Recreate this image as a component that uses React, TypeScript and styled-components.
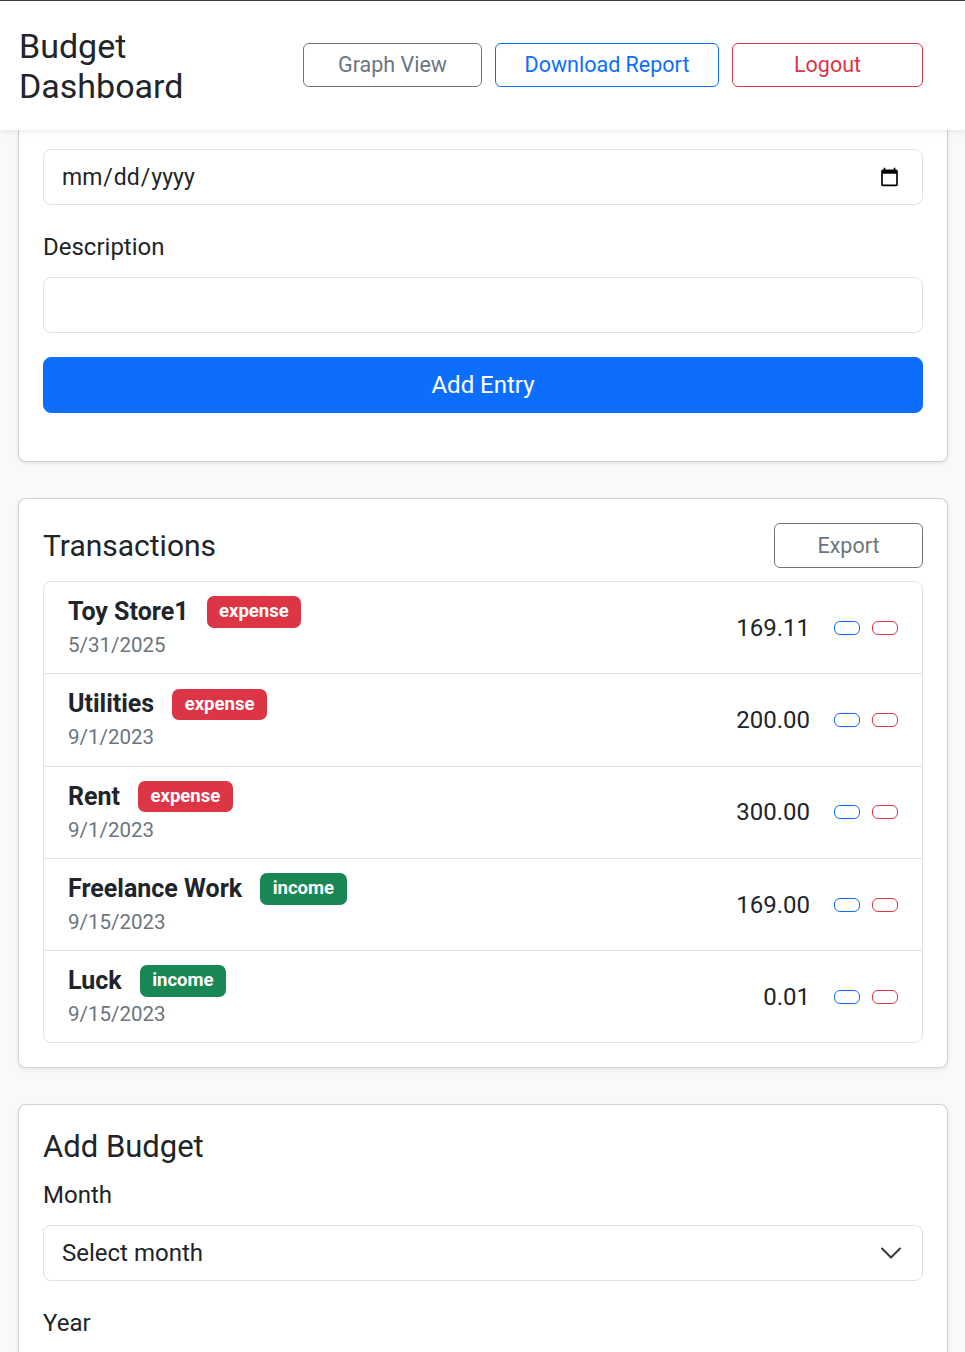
import React from 'react';
import styled, { createGlobalStyle } from 'styled-components';

const Global = createGlobalStyle`
  html, body { margin: 0; padding: 0; }
  body {
    background: #f8f9fa;
    font-family: Roboto, "Noto Sans", "Liberation Sans", sans-serif;
    color: #212529;
  }
  * { box-sizing: border-box; }
`;

type Tone = 'secondary' | 'primary' | 'danger';
const toneColor: Record<Tone, string> = {
  secondary: '#6c757d',
  primary: '#0d6efd',
  danger: '#dc3545',
};

const Header = styled.header`
  position: relative;
  z-index: 2;
  height: 130px;
  background: #fff;
  border-top: 1px solid #3c3c3c;
  box-shadow: 0 2px 6px rgba(0, 0, 0, 0.08);
  display: flex;
  align-items: center;
  justify-content: space-between;
  padding: 0 42px 0 19px;
`;

const Title = styled.h1`
  margin: 0;
  max-width: 200px;
  font-size: 34px;
  font-weight: 400;
  line-height: 40px;
  color: #212529;
`;

const Nav = styled.nav`
  display: flex;
  gap: 13px;
  margin-bottom: 2px;
`;

const OutlineButton = styled.button<{ $tone: Tone; $w: number; $h?: number }>`
  width: ${(p) => p.$w}px;
  height: ${(p) => p.$h ?? 44}px;
  background: transparent;
  border: 1px solid ${(p) => toneColor[p.$tone]};
  border-radius: 6px;
  color: ${(p) => toneColor[p.$tone]};
  font-family: inherit;
  font-size: 21.5px;
  font-weight: 400;
  padding: 0;
  cursor: pointer;
`;

const Main = styled.main`
  display: flex;
  flex-direction: column;
  gap: 36px;
  margin: 0 17px 0 18px;
`;

const Card = styled.section<{ $cut?: boolean }>`
  background: #fff;
  border: 1px solid rgba(0, 0, 0, 0.175);
  border-top: ${(p) => (p.$cut ? 'none' : '1px solid rgba(0, 0, 0, 0.175)')};
  border-radius: ${(p) => (p.$cut ? '0 0 8px 8px' : '8px')};
  box-shadow: 0 2px 4px rgba(0, 0, 0, 0.075);
  padding: ${(p) => (p.$cut ? '19px 24px 24px' : '24px')};
`;

const Group = styled.div`
  margin-bottom: 24px;
`;

const Label = styled.label`
  display: block;
  font-size: 24px;
  line-height: 36px;
  margin-bottom: 12px;
`;

const Input = styled.input`
  display: block;
  width: 100%;
  height: 56px;
  padding: 9px 18px;
  font-family: inherit;
  font-size: 24px;
  color: #212529;
  background: #fff;
  border: 1px solid #dee2e6;
  border-radius: 8px;
  outline: none;
`;

const DateInput = styled(Input)`
  padding: 9px 20px 9px 17px;
  font-size: 23px;
  &::-webkit-calendar-picker-indicator {
    width: 21px;
    height: 21px;
    margin: 0;
    opacity: 1;
  }
`;

const SelectWrap = styled.div`
  position: relative;
`;

const Select = styled.select`
  display: block;
  width: 100%;
  height: 56px;
  padding: 9px 56px 9px 18px;
  font-family: inherit;
  font-size: 24px;
  color: #212529;
  background: #fff;
  border: 1px solid #dee2e6;
  border-radius: 8px;
  appearance: none;
  outline: none;
`;

const Chevron = styled.svg`
  position: absolute;
  right: 20px;
  top: 50%;
  margin-top: -12px;
  pointer-events: none;
`;

const PrimaryButton = styled.button`
  display: block;
  width: 100%;
  height: 56px;
  background: #0d6efd;
  border: 1px solid #0d6efd;
  border-radius: 8px;
  color: #fff;
  font-family: inherit;
  font-size: 24px;
  cursor: pointer;
`;

const CardHead = styled.div`
  display: flex;
  align-items: center;
  justify-content: space-between;
  margin-bottom: 13px;
`;

const CardTitle = styled.h2<{ $mb?: number; $size?: number }>`
  margin: 0 0 ${(p) => p.$mb ?? 0}px;
  font-size: ${(p) => p.$size ?? 30}px;
  font-weight: 400;
  line-height: 36px;
`;

const List = styled.ul`
  list-style: none;
  margin: 0;
  padding: 0;
  border: 1px solid #dee2e6;
  border-radius: 8px;
`;

const Item = styled.li`
  display: flex;
  align-items: center;
  justify-content: space-between;
  padding: 12px 24px;
  border-bottom: 1px solid #dee2e6;
  &:last-child {
    border-bottom: none;
  }
`;

const Info = styled.div`
  display: flex;
  flex-direction: column;
`;

const NameLine = styled.div`
  display: flex;
  align-items: center;
  gap: 18px;
  height: 36px;
`;

const Name = styled.span`
  font-size: 25px;
  font-weight: 700;
  line-height: 36px;
`;

const Badge = styled.span<{ $kind: 'expense' | 'income' }>`
  display: inline-block;
  background: ${(p) => (p.$kind === 'expense' ? '#dc3545' : '#198754')};
  color: #fff;
  font-size: 18.5px;
  font-weight: 700;
  line-height: 1;
  padding: 6px 12.5px 7px;
  border-radius: 7px;
`;

const DateText = styled.span`
  font-size: 20.5px;
  line-height: 31.3px;
  color: #6c757d;
`;

const Actions = styled.div`
  display: flex;
  align-items: center;
  gap: 12px;
`;

const Amount = styled.span`
  font-size: 24px;
  line-height: 36px;
  margin-right: 12px;
`;

const TinyButton = styled.button<{ $tone: Tone }>`
  width: 26px;
  height: 14px;
  padding: 0;
  background: transparent;
  border: 1px solid ${(p) => toneColor[p.$tone]};
  border-radius: 6px;
  cursor: pointer;
`;

type Tx = { name: string; kind: 'expense' | 'income'; date: string; amount: string };
const txs: Tx[] = [
  { name: 'Toy Store1', kind: 'expense', date: '5/31/2025', amount: '169.11' },
  { name: 'Utilities', kind: 'expense', date: '9/1/2023', amount: '200.00' },
  { name: 'Rent', kind: 'expense', date: '9/1/2023', amount: '300.00' },
  { name: 'Freelance Work', kind: 'income', date: '9/15/2023', amount: '169.00' },
  { name: 'Luck', kind: 'income', date: '9/15/2023', amount: '0.01' },
];

export default function App() {
  return (
    <>
      <Global />
      <Header>
        <Title>Budget Dashboard</Title>
        <Nav>
          <OutlineButton $tone="secondary" $w={179}>Graph View</OutlineButton>
          <OutlineButton $tone="primary" $w={224}>Download Report</OutlineButton>
          <OutlineButton $tone="danger" $w={191}>Logout</OutlineButton>
        </Nav>
      </Header>
      <Main>
        <Card $cut>
          <Group>
            <DateInput type="date" />
          </Group>
          <Group>
            <Label>Description</Label>
            <Input type="text" />
          </Group>
          <Group>
            <PrimaryButton>Add Entry</PrimaryButton>
          </Group>
        </Card>

        <Card>
          <CardHead>
            <CardTitle>Transactions</CardTitle>
            <OutlineButton $tone="secondary" $w={149} $h={45}>Export</OutlineButton>
          </CardHead>
          <List>
            {txs.map((t) => (
              <Item key={t.name}>
                <Info>
                  <NameLine>
                    <Name>{t.name}</Name>
                    <Badge $kind={t.kind}>{t.kind}</Badge>
                  </NameLine>
                  <DateText>{t.date}</DateText>
                </Info>
                <Actions>
                  <Amount>{t.amount}</Amount>
                  <TinyButton $tone="primary" aria-label="Edit" />
                  <TinyButton $tone="danger" aria-label="Delete" />
                </Actions>
              </Item>
            ))}
          </List>
        </Card>

        <Card>
          <CardTitle $mb={12} $size={31}>Add Budget</CardTitle>
          <Group>
            <Label>Month</Label>
            <SelectWrap>
              <Select defaultValue="">
                <option value="">Select month</option>
              </Select>
              <Chevron width="24" height="24" viewBox="0 0 16 16" fill="none">
                <path d="m2 5 6 6 6-6" stroke="#343a40" strokeWidth="1.4" strokeLinecap="round" strokeLinejoin="round" />
              </Chevron>
            </SelectWrap>
          </Group>
          <Group>
            <Label>Year</Label>
            <Input type="number" />
          </Group>
        </Card>
      </Main>
    </>
  );
}
